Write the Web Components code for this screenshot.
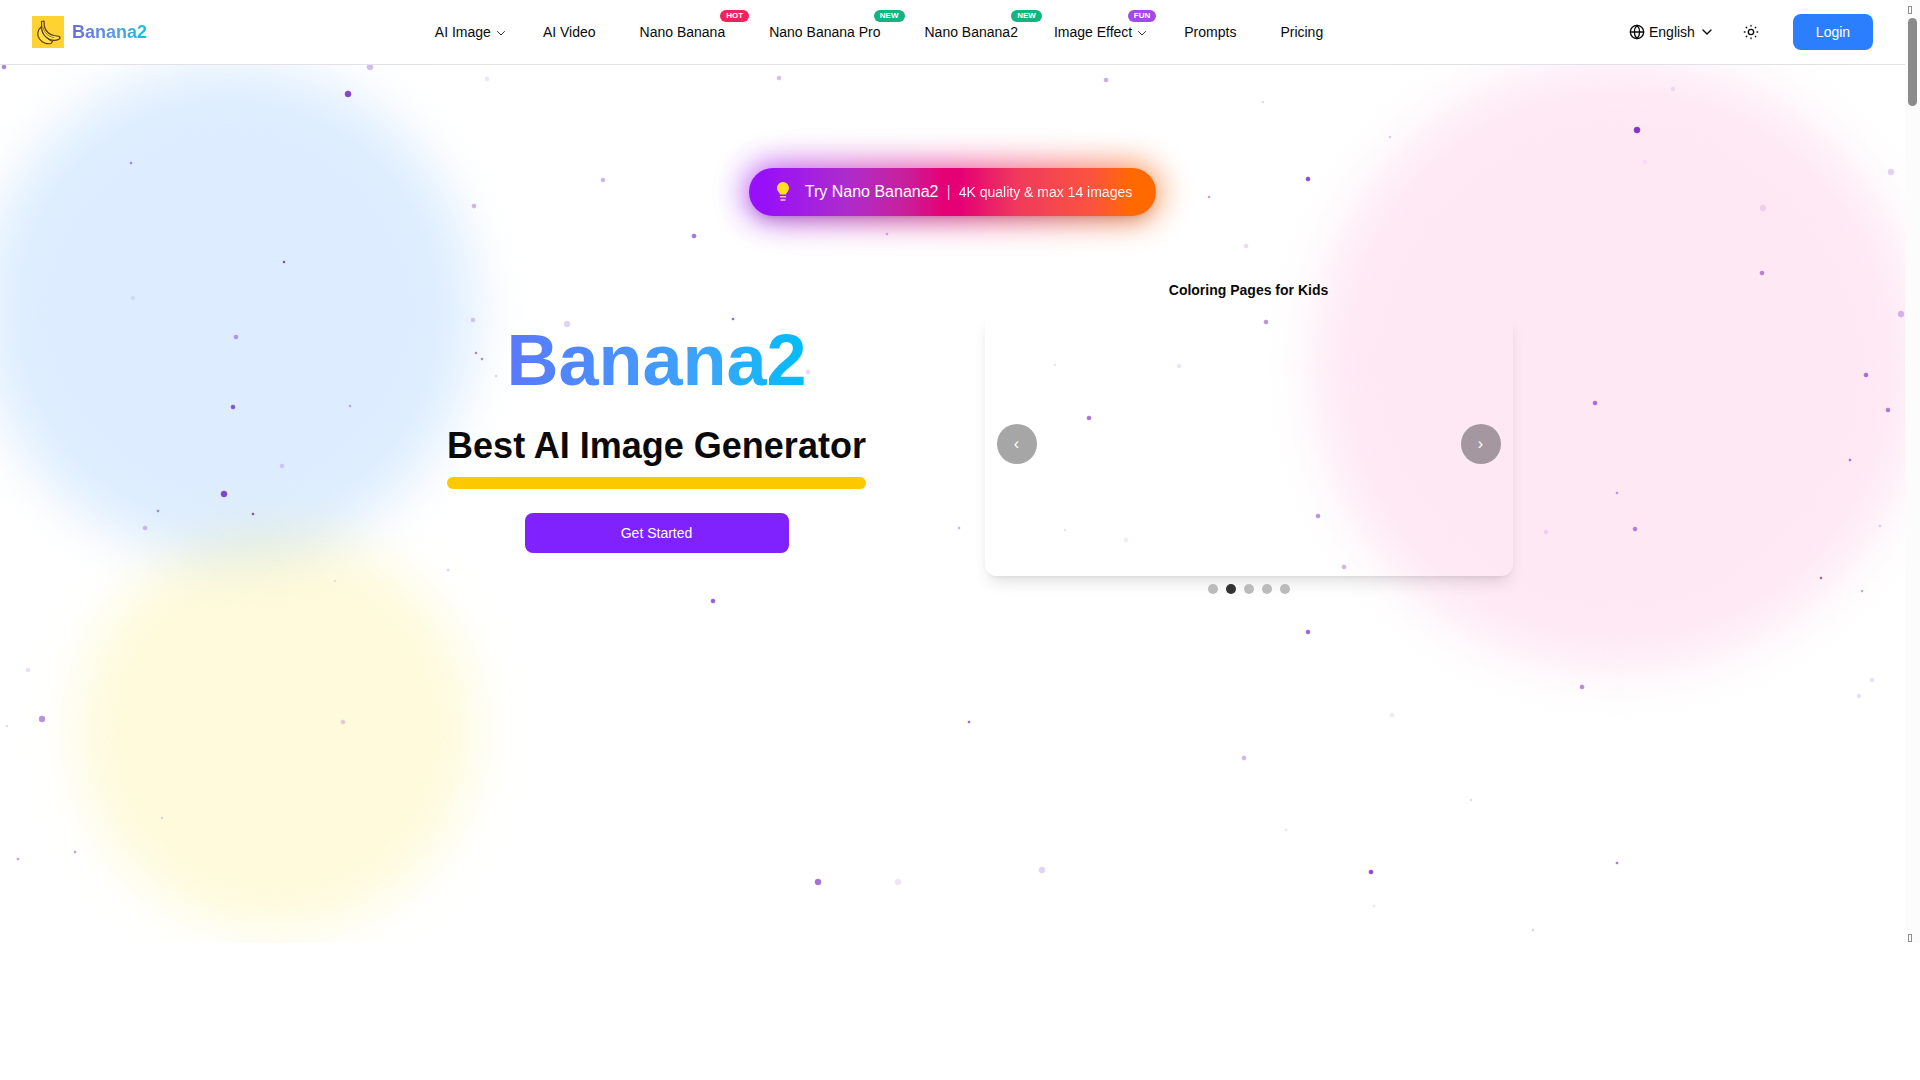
<!DOCTYPE html>
<html lang="en">
<head>
<meta charset="utf-8">
<title>Banana2</title>
<style>
  body {
    margin: 0;
    background: #fff;
    color: #0a0a0a;
    font-family: "Liberation Sans", Arial, sans-serif;
    font-size: 14px;
    line-height: 20px;
  }
</style>
</head>
<body>
<app-shell>
  <hero-backdrop slot="backdrop"></hero-backdrop>
  <site-header slot="header">
    <nav-item>AI Image</nav-item>
    <nav-item href="#video">AI Video</nav-item>
    <nav-item href="#nano" badge="HOT" tone="#f0235a">Nano Banana</nav-item>
    <nav-item href="#pro" badge="NEW" tone="#12b482">Nano Banana Pro</nav-item>
    <nav-item href="#nano2" badge="NEW" tone="#12b482">Nano Banana2</nav-item>
    <nav-item badge="FUN" tone="#a04be8">Image Effect</nav-item>
    <nav-item href="#prompts">Prompts</nav-item>
    <nav-item href="#pricing">Pricing</nav-item>
  </site-header>
  <promo-pill>
    Try Nano Banana2
    <span slot="detail">4K quality &amp; max 14 images</span>
  </promo-pill>
  <hero-section>
    <hero-title>
      Banana2
      <span slot="tagline">Best AI Image Generator</span>
      <span slot="action">Get Started</span>
    </hero-title>
    <image-carousel count="5" active="1">Coloring Pages for Kids</image-carousel>
  </hero-section>
</app-shell>

<script>
class AppShell extends HTMLElement {
  connectedCallback() {
    this.attachShadow({ mode: 'open' });
    this.shadowRoot.innerHTML = `
      <style>
        :host {
          display: grid;
          grid-template-columns: minmax(0, 1fr) 15px;
          min-height: calc(100vh - 137px);
        }
        .page {
          position: relative;
          isolation: isolate;
          overflow: hidden;
        }
        main {
          display: flex;
          flex-direction: column;
          align-items: center;
          gap: 64px;
          padding: 103px 24px 64px;
        }
      </style>
      <div class="page">
        <slot name="backdrop"></slot>
        <slot name="header"></slot>
        <main><slot></slot></main>
      </div>
      <scroll-rail></scroll-rail>
    `;
  }
}

class ScrollRail extends HTMLElement {
  connectedCallback() {
    this.attachShadow({ mode: 'open' });
    this.shadowRoot.innerHTML = `
      <style>
        :host {
          display: flex;
          flex-direction: column;
          justify-content: space-between;
          box-sizing: border-box;
          padding: 6px 3px 1px;
          background: #fcfcfc;
        }
        .thumb {
          height: 88px;
          margin: 4px 0 auto;
          border-radius: 5px;
          background: #8b8b8b;
        }
        .end {
          box-sizing: border-box;
          width: 4px;
          height: 8px;
          border: 1px solid #8f8f8f;
        }
      </style>
      <div class="end"></div>
      <div class="thumb"></div>
      <div class="end"></div>
    `;
  }
}

// x, y, radius, opacity
const PARTICLES = [
  [4, 67, 2, .6], [370, 67, 3, .3], [348, 94, 3, .85], [487, 79, 2, .12], [779, 78, 2, .3],
  [1106, 80, 2, .4], [1263, 102, 1, .2], [1390, 137, 1, .25], [131, 163, 1, .6], [603, 180, 2, .35],
  [474, 206, 2, .35], [694, 236, 2, .65], [887, 234, 1, .4], [1209, 197, 1, .5], [1308, 179, 2, .85],
  [1246, 246, 2, .18], [1637, 130, 3, .9], [1673, 89, 2, .1], [1645, 162, 2, .06], [1763, 208, 3, .12],
  [1762, 273, 2, .55], [1891, 172, 3, .2], [1901, 314, 3, .3], [284, 262, 1, .9], [133, 298, 2, .1],
  [236, 337, 2, .45], [473, 320, 2, .25], [476, 353, 1, .6], [482, 359, 1, .6], [496, 376, 1, .2],
  [567, 324, 3, .2], [733, 319, 1, .8], [808, 372, 2, .18], [233, 407, 2, .8], [350, 406, 1, .4],
  [282, 466, 2, .2], [224, 494, 3, .85], [158, 511, 1, .6], [253, 514, 1, .9], [145, 528, 2, .3],
  [448, 570, 1, .25], [335, 581, 1, .15], [713, 601, 2, .75], [959, 528, 1, .4], [1089, 418, 2, .65],
  [1055, 365, 1, .15], [1179, 366, 2, .13], [1266, 322, 2, .5], [1318, 516, 2, .5], [1344, 567, 2, .35],
  [1065, 530, 1, .15], [1126, 540, 2, .1], [1546, 532, 2, .13], [1595, 403, 2, .65], [1617, 493, 1, .5],
  [1635, 529, 2, .55], [1866, 375, 2, .65], [1888, 410, 2, .6], [1850, 460, 1, .7], [1880, 526, 1, .25],
  [1821, 578, 1, .8], [1862, 591, 1, .45], [1308, 632, 2, .7], [1582, 687, 2, .55], [1872, 680, 2, .15],
  [1859, 696, 2, .15], [1392, 715, 2, .1], [28, 670, 2, .15], [42, 719, 3, .5], [7, 726, 1, .2],
  [343, 722, 2, .22], [969, 722, 1, .8], [1244, 758, 2, .35], [162, 818, 1, .2], [75, 852, 1, .5],
  [18, 859, 1, .5], [818, 882, 3, .65], [898, 882, 3, .12], [1042, 870, 3, .2], [1371, 872, 2, .85],
  [1617, 863, 1, .7], [1471, 800, 1, .2], [1286, 830, 1, .15], [1374, 906, 1, .15], [1533, 930, 1, .25]
];

class HeroBackdrop extends HTMLElement {
  connectedCallback() {
    this.attachShadow({ mode: 'open' });
    this.shadowRoot.innerHTML = `
      <style>
        :host {
          position: absolute;
          inset: 0;
          z-index: -1;
          overflow: hidden;
        }
        .blob {
          position: absolute;
          aspect-ratio: 1;
          border-radius: 50%;
          filter: blur(26px);
        }
        .blue { top: 64px; left: -1%; width: 26%; background: #ddedff; }
        .pink { top: 60px; right: -1%; width: 32%; background: #fee8f4; }
        .yellow { bottom: 12px; left: 4%; width: 21%; background: #fefadb; mix-blend-mode: multiply; }
        svg {
          position: absolute;
          width: 100%;
          height: 100%;
          fill: #7426c0;
          stroke: #7426c0;
          stroke-width: .6;
        }
      </style>
      <div class="blob blue"></div>
      <div class="blob yellow"></div>
      <div class="blob pink"></div>
      <svg aria-hidden="true">
        ${PARTICLES.map(([x, y, r, o]) => `<circle cx="${x}" cy="${y}" r="${r}" opacity="${o}"/>`).join('')}
      </svg>
    `;
  }
}

class SiteHeader extends HTMLElement {
  connectedCallback() {
    this.attachShadow({ mode: 'open' });
    this.shadowRoot.innerHTML = `
      <style>
        :host {
          display: flex;
          align-items: center;
          justify-content: space-between;
          height: 64px;
          padding: 0 32px;
          border-bottom: 1px solid #e2e2e6;
          background: #fff;
        }
        .brand {
          display: flex;
          align-items: center;
          gap: 8px;
          font-size: 18px;
          line-height: 28px;
          font-weight: bold;
          text-decoration: none;
        }
        .brand span {
          background: linear-gradient(90deg, #6a6cda, #5f94e0 50%, #12c4dc);
          -webkit-background-clip: text;
          background-clip: text;
          color: transparent;
        }
        nav {
          display: flex;
          gap: 4px;
        }
        .tools {
          display: flex;
          align-items: center;
          gap: 4px;
        }
        .lang {
          display: flex;
          align-items: center;
          gap: 4px;
          padding: 0 12px 0 10px;
        }
        select {
          appearance: none;
          border: 0;
          padding: 0;
          background: none;
          color: inherit;
          font: inherit;
        }
        button {
          border: 0;
          font: inherit;
          cursor: pointer;
        }
        .theme {
          display: grid;
          place-items: center;
          width: 40px;
          height: 36px;
          padding: 0;
          background: none;
          color: inherit;
        }
        .login {
          width: 80px;
          height: 36px;
          margin-left: 18px;
          border-radius: 8px;
          background: #2b7fff;
          color: #fff;
        }
        .line {
          fill: none;
          stroke: currentColor;
          stroke-width: 2;
          stroke-linecap: round;
          stroke-linejoin: round;
        }
      </style>
      <a class="brand" href="#home">
        <svg width="32" height="32" viewBox="0 0 32 32" aria-hidden="true">
          <rect width="32" height="32" fill="#fdd231"/>
          <g fill="#ffe04a" stroke="#5a3c14" stroke-width="1.2" stroke-linejoin="round" stroke-linecap="round">
            <path d="M9.500 10.500C5.500 14 4.500 19 7.500 23C10 26.500 15 28.500 19 27.500L20.500 25.500C16 23.500 12.500 19.500 11.500 13Z"/>
            <path d="M9.500 5.500L12 5L12.300 10.500C13.500 15 17.500 18.500 22 19.500L27.500 20.500L28 22.500C24.500 25.500 18.500 24.800 14.500 21.500C11 18.500 9.300 14.500 9.700 10.500Z"/>
            <path d="M11 11.500C12 16.500 16 20.500 21.500 21.500" fill="none" stroke-width=".6"/>
          </g>
        </svg>
        <span>Banana2</span>
      </a>
      <nav aria-label="Main"><slot></slot></nav>
      <div class="tools">
        <label class="lang">
          <svg class="line" width="16" height="16" viewBox="0 0 24 24" aria-hidden="true">
            <circle cx="12" cy="12" r="10"/>
            <path d="M12 2a14.500 14.500 0 0 0 0 20 14.500 14.500 0 0 0 0-20M2 12h20"/>
          </svg>
          <select aria-label="Language"><option>English</option></select>
          <svg class="line" width="16" height="16" viewBox="0 0 24 24" aria-hidden="true">
            <path d="m6 9 6 6 6-6"/>
          </svg>
        </label>
        <button class="theme" aria-label="Toggle theme">
          <svg class="line" width="16" height="16" viewBox="0 0 24 24" aria-hidden="true">
            <circle cx="12" cy="12" r="4"/>
            <path d="M12 2v1M12 21v1M2 12h1M21 12h1M4.900 4.900l.7.7M18.400 18.400l.7.7M4.900 19.100l.7-.7M18.400 5.600l.7-.7"/>
          </svg>
        </button>
        <button class="login">Login</button>
      </div>
    `;
  }
}

class NavItem extends HTMLElement {
  connectedCallback() {
    const href = this.getAttribute('href');
    const badge = this.getAttribute('badge');
    const mark = badge ? `<span class="badge">${badge}</span>` : '';
    this.attachShadow({ mode: 'open' });
    this.shadowRoot.innerHTML = `
      <style>
        :host {
          display: block;
        }
        a, button {
          position: relative;
          display: flex;
          align-items: center;
          box-sizing: border-box;
          height: 36px;
          border: 0;
          padding: 0 20px;
          background: none;
          color: inherit;
          font: inherit;
          white-space: nowrap;
          text-decoration: none;
        }
        button {
          gap: 4px;
          padding: 0 12px;
        }
        svg {
          margin-top: 2px;
        }
        .badge {
          position: absolute;
          top: -4px;
          right: -4px;
          padding: 0 6px;
          border-radius: 6px;
          background: ${this.getAttribute('tone')};
          color: #fff;
          font-size: 8px;
          line-height: 12px;
          font-weight: bold;
        }
        button .badge {
          right: 4px;
        }
      </style>
      ${href
        ? `<a href="${href}"><slot></slot>${mark}</a>`
        : `<button><slot></slot>
            <svg width="12" height="12" viewBox="0 0 24 24" fill="none" stroke="#333" stroke-width="2" stroke-linecap="round" stroke-linejoin="round" aria-hidden="true"><path d="m5 9 7 7 7-7"/></svg>
            ${mark}</button>`}
    `;
  }
}

class PromoPill extends HTMLElement {
  connectedCallback() {
    this.attachShadow({ mode: 'open' });
    this.shadowRoot.innerHTML = `
      <style>
        :host {
          display: block;
          position: relative;
          isolation: isolate;
        }
        :host::before {
          content: "";
          position: absolute;
          inset: -4px;
          z-index: -1;
          border-radius: 28px;
          background: linear-gradient(90deg, #9810fa, #e60076 50%, #ff6900);
          filter: blur(16px);
          opacity: .7;
        }
        a {
          display: flex;
          align-items: center;
          gap: 12px;
          height: 48px;
          padding: 0 24px;
          border-radius: 24px;
          background: linear-gradient(90deg, #9810fa 4%, #ad2ccc 24%, #c8209c 38%, #e60076 48%, #e60076 52%, #f03a5c 66%, #fb5340 84%, #ff6900 94%);
          box-shadow: 0 10px 15px -3px rgba(0, 0, 0, .1), 0 4px 6px -4px rgba(0, 0, 0, .1);
          color: #fff;
          font-size: 16px;
          line-height: 24px;
          text-decoration: none;
        }
        .text {
          display: flex;
          align-items: center;
          gap: 8px;
        }
        .bar {
          opacity: .7;
        }
        .detail {
          font-size: 14px;
          opacity: .95;
        }
      </style>
      <a href="#nano2">
        <svg width="20" height="20" viewBox="0 0 20 20" aria-hidden="true">
          <path fill="#ffdf20" d="M10 0a6 6 0 0 1 6 6c0 2.300-1.300 3.600-2.200 4.800-.5.700-.8 1.400-.8 1.700H7c0-.3-.3-1-.8-1.700C5.300 9.600 4 8.300 4 6a6 6 0 0 1 6-6Z"/>
          <path stroke="#ffc9b8" stroke-width="1.500" stroke-linecap="round" d="M7.500 14.800h5M8 18h4"/>
        </svg>
        <span class="text">
          <slot></slot>
          <span class="bar">|</span>
          <span class="detail"><slot name="detail"></slot></span>
        </span>
      </a>
    `;
  }
}

class HeroSection extends HTMLElement {
  connectedCallback() {
    this.attachShadow({ mode: 'open' });
    this.shadowRoot.innerHTML = `
      <style>
        :host {
          display: grid;
          grid-template-columns: 1fr 1fr;
          align-items: center;
          gap: 32px;
          width: 100%;
          max-width: 1152px;
        }
      </style>
      <slot></slot>
    `;
  }
}

class HeroTitle extends HTMLElement {
  connectedCallback() {
    this.attachShadow({ mode: 'open' });
    this.shadowRoot.innerHTML = `
      <style>
        :host {
          display: flex;
          flex-direction: column;
          align-items: center;
        }
        h1, h2 {
          margin: 0;
          font-weight: bold;
        }
        h1 {
          background: linear-gradient(90deg, #5a78fc, #4893fd 40%, #38a6fa 68%, #00bef6);
          -webkit-background-clip: text;
          background-clip: text;
          color: transparent;
          font-size: 72px;
          line-height: 72px;
        }
        h2 {
          margin-top: 30px;
          font-size: 36px;
          line-height: 40px;
        }
        h2::after {
          content: "";
          display: block;
          height: 12px;
          margin-top: 11px;
          border-radius: 6px;
          background: #fcc800;
        }
        button {
          width: 264px;
          height: 40px;
          margin-top: 24px;
          border: 0;
          border-radius: 8px;
          background: #7f22fe;
          color: #fff;
          font: inherit;
          cursor: pointer;
        }
      </style>
      <h1><slot></slot></h1>
      <h2><slot name="tagline"></slot></h2>
      <button><slot name="action"></slot></button>
    `;
  }
}

class ImageCarousel extends HTMLElement {
  connectedCallback() {
    const count = Number(this.getAttribute('count'));
    const active = Number(this.getAttribute('active'));
    this.attachShadow({ mode: 'open' });
    this.shadowRoot.innerHTML = `
      <style>
        :host {
          display: block;
          padding: 0 16px 3px;
        }
        h3 {
          margin: 0 0 12px;
          font-size: 14px;
          line-height: 20px;
          text-align: center;
        }
        .stage {
          display: flex;
          align-items: center;
          justify-content: space-between;
          box-sizing: border-box;
          aspect-ratio: 2;
          padding: 0 12px;
          border-radius: 12px;
          box-shadow: 0 10px 15px -3px rgba(0, 0, 0, .1), 0 4px 6px -4px rgba(0, 0, 0, .1);
        }
        button {
          border: 0;
          padding: 0;
          border-radius: 50%;
          cursor: pointer;
        }
        .arrow {
          width: 40px;
          height: 40px;
          background: rgba(0, 0, 0, .35);
          color: #fff;
          font: inherit;
          font-size: 16px;
        }
        .dots {
          display: flex;
          justify-content: center;
          gap: 8px;
          margin-top: 8px;
        }
        .dots button {
          width: 10px;
          height: 10px;
          background: #bbb;
        }
        .dots [aria-current] {
          background: #333;
        }
      </style>
      <h3><slot></slot></h3>
      <div class="stage">
        <button class="arrow" aria-label="Previous">‹</button>
        <button class="arrow" aria-label="Next">›</button>
      </div>
      <div class="dots">
        ${Array.from({ length: count }, (_, i) =>
          `<button aria-label="Slide ${i + 1}"${i === active ? ' aria-current="true"' : ''}></button>`).join('')}
      </div>
    `;
  }
}

customElements.define('app-shell', AppShell);
customElements.define('scroll-rail', ScrollRail);
customElements.define('hero-backdrop', HeroBackdrop);
customElements.define('site-header', SiteHeader);
customElements.define('nav-item', NavItem);
customElements.define('promo-pill', PromoPill);
customElements.define('hero-section', HeroSection);
customElements.define('hero-title', HeroTitle);
customElements.define('image-carousel', ImageCarousel);
</script>
</body>
</html>
